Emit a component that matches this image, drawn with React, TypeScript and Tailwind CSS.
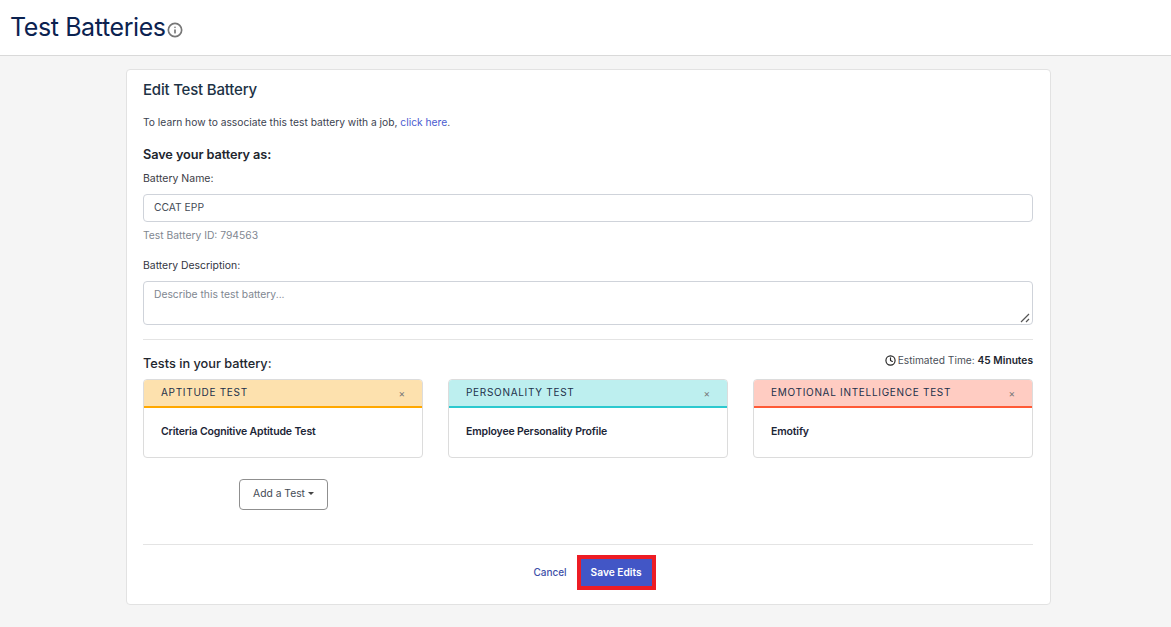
import { Info, Clock } from "lucide-react";

const font = { fontFamily: "Inter, 'Noto Sans', sans-serif" };

function TestCard({ title, name, head, line }: { title: string; name: string; head: string; line: string }) {
  return (
    <div className="w-[280px] h-[79px] rounded-[4px] border border-[#dcdcdc] bg-white overflow-hidden">
      <div className={`h-[28px] pb-[1px] flex items-center justify-between pl-[17px] pr-[17px] border-b-2 ${head} ${line}`}>
        <span className="text-[10px] tracking-[0.7px] text-[#22304a]">{title}</span>
        <span className="text-[10px] leading-none text-[#777]">×</span>
      </div>
      <div className="pl-[17px] pt-[17px] text-[10.5px] leading-[14px] font-semibold text-[#1c2536] tracking-[-0.15px]">{name}</div>
    </div>
  );
}

export default function App() {
  return (
    <div style={font} className="min-h-[627px] bg-[#f5f5f5]">
      <header className="h-[56px] bg-white border-b border-[#d9d9d9] pl-[10px] flex items-center">
        <h1 className="text-[25px] leading-none text-[#0b2250] tracking-[-0.4px]">Test Batteries</h1>
        <Info className="ml-[1px] mt-[4px] w-[16px] h-[16px] text-[#777]" strokeWidth={2.5} />
      </header>
      <main className="pt-[13px] pl-[126px]">
        <div className="w-[925px] h-[536px] bg-white border border-[#e2e2e2] rounded-[4px] pl-[16px] pr-[17px]">
          <h2 className="pt-[11px] text-[15px] leading-[18px] font-medium text-[#1d3245] tracking-[-0.2px]">Edit Test Battery</h2>
          <p className="mt-[16px] text-[10.25px] leading-[14px] text-[#3b4250]">
            To learn how to associate this test battery with a job, <span className="text-[#4a5bd0]">click here</span>.
          </p>
          <h3 className="mt-[18px] text-[12.75px] leading-[16px] font-semibold text-[#22262e] tracking-[-0.1px]">Save your battery as:</h3>
          <label className="block mt-[9px] text-[10.5px] leading-[14px] text-[#3c3c46]">Battery Name:</label>
          <div className="mt-[8px] h-[28px] border border-[#cfd3da] rounded-[4px] pl-[10px] flex items-center text-[10.3px] text-[#444b55]">CCAT EPP</div>
          <p className="mt-[6px] text-[10.3px] leading-[14px] text-[#7f8791]">Test Battery ID: 794563</p>
          <label className="block mt-[17px] text-[10.4px] leading-[14px] text-[#33363f]">Battery Description:</label>
          <div className="relative mt-[8px] h-[44px] border border-[#cfd3da] rounded-[4px] pl-[10px] pt-[5px] text-[10.3px] leading-[14px] text-[#7f8791]">
            Describe this test battery...
            <svg className="absolute right-[2px] bottom-[1px] w-[10px] h-[10px]" viewBox="0 0 10 10" stroke="#555" strokeWidth="1.2" fill="none">
              <path d="M1 9 9 1M6 9l3-3" />
            </svg>
          </div>
          <div className="mt-[14px] border-t border-[#e4e4e4]" />
          <div className="flex justify-between h-[39px]">
            <h3 className="pt-[16px] text-[12.75px] leading-[16px] font-medium text-[#22262e]">Tests in your battery:</h3>
            <div className="pt-[14px] flex items-start text-[10.2px] leading-[13px] text-[#4a4f58]">
              <Clock className="mr-[2px] mt-[1px] w-[11px] h-[11px] text-[#222]" strokeWidth={2.5} />
              <span>Estimated Time:&nbsp;</span>
              <span className="font-semibold text-[#22262e]">45 Minutes</span>
            </div>
          </div>
          <div className="flex justify-between">
            <TestCard title="APTITUDE TEST" name="Criteria Cognitive Aptitude Test" head="bg-[#fde1ae]" line="border-[#ffa800]" />
            <TestCard title="PERSONALITY TEST" name="Employee Personality Profile" head="bg-[#bdefef]" line="border-[#2cc9cf]" />
            <TestCard title="EMOTIONAL INTELLIGENCE TEST" name="Emotify" head="bg-[#ffccc2]" line="border-[#ff5a36]" />
          </div>
          <div className="mt-[21px] pl-[96px]">
            <button className="w-[89px] h-[31px] pb-[1px] border border-[#8f8f8f] rounded-[4px] flex items-center justify-center text-[10.3px] text-[#444b55]">
              Add a Test
              <span className="ml-[3px] mb-[2px] w-0 h-0 border-x-[3px] border-x-transparent border-t-[3px] border-t-[#444]" />
            </button>
          </div>
          <div className="mt-[34px] border-t border-[#e4e4e4]" />
          <div className="mt-[10px] pl-[13px] flex justify-center items-center">
            <span className="text-[10px] font-medium text-[#3d4fa8] mr-[10px]">Cancel</span>
            <button className="w-[79px] h-[35px] border-[4px] border-[#ed1c24] bg-[#4256c6] flex items-center justify-center text-[10.2px] font-semibold text-white">
              Save Edits
            </button>
          </div>
        </div>
      </main>
    </div>
  );
}
